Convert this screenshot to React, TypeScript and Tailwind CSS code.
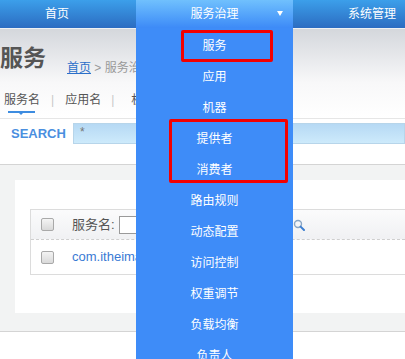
const FONT = "font-['Liberation_Sans','Noto_Sans_CJK_SC',sans-serif]";

const MENU = [
  "服务",
  "应用",
  "机器",
  "提供者",
  "消费者",
  "路由规则",
  "动态配置",
  "访问控制",
  "权重调节",
  "负载均衡",
  "负责人",
];

function Checkbox() {
  return (
    <span className="block h-[13px] w-[13px] rounded-[2px] border border-[#a9a9a9] bg-gradient-to-b from-[#f4f4f4] to-[#d9d9d9]" />
  );
}

function NavBar() {
  return (
    <div className="relative flex h-[28px] bg-gradient-to-b from-[#3c9fea] to-[#2c6cc1] text-[12px] text-white">
      <div className="flex w-[114px] shrink-0 items-center justify-center">首页</div>
      <div className="w-[22px] shrink-0" />
      <div className="relative flex w-[157px] shrink-0 items-center justify-center bg-gradient-to-b from-[#70c0fd] to-[#3d8af7]">
        服务治理
        <span className="absolute left-[141px] top-[11px] h-0 w-0 border-x-[3px] border-t-[5px] border-x-transparent border-t-white" />
      </div>
      <div className="flex w-[158px] shrink-0 items-center justify-center">系统管理</div>
    </div>
  );
}

function DropMenu() {
  return (
    <div className="absolute left-[136px] top-[28px] h-[331px] w-[157px] overflow-hidden bg-[#3e8cf8]">
      <div className="flex flex-col pt-[2px]">
        {MENU.map((m) => (
          <div key={m} className="flex h-[31px] shrink-0 items-center justify-center text-[12px] text-white">
            {m}
          </div>
        ))}
      </div>
      <div className="absolute left-[45px] top-[2px] h-[32px] w-[92px] rounded-[2px] border-[3px] border-[#f30000]" />
      <div className="absolute left-[33px] top-[91px] h-[64px] w-[119px] rounded-[2px] border-[3px] border-[#f30000]" />
    </div>
  );
}

export default function App() {
  return (
    <div className={`relative h-[359px] w-[405px] overflow-hidden bg-white ${FONT}`}>
      <NavBar />

      <div className="border-t border-b border-t-[#eef0f3] border-b-[#e6e6e6] bg-gradient-to-b from-[#d4d7dc] via-[#f8f8f9] via-60% to-white">
        <div className="flex h-[43px] pt-[15px]">
          <div className="h-[28px] text-[23px] font-bold leading-[28px] text-[#555]">服务</div>
          <div className="ml-[21px] mt-[16px] h-[16px] whitespace-nowrap text-[12px] leading-[16px] text-[#999]">
            <span className="text-[#2a6fc9] underline">首页</span> &gt; 服务治理
          </div>
        </div>
        <div className="mt-[20px] flex h-[16px] items-center whitespace-nowrap text-[12px] leading-[16px] text-[#555]">
          <span className="ml-[4px]">服务名</span>
          <span className="mx-[11px] text-[#c8c8c8]">|</span>
          <span>应用名</span>
          <span className="ml-[10px] mr-[17px] text-[#c8c8c8]">|</span>
          <span>机器</span>
        </div>
        <div className="relative ml-[8px] mt-[3px] h-[2px] w-[27px] bg-[#3d8ce0]">
          <span className="absolute left-[11px] top-[2px] h-0 w-0 border-x-[2px] border-t-[2px] border-x-transparent border-t-[#3d8ce0]" />
        </div>
        <div className="h-[5px]" />
      </div>

      <div className="flex h-[29px] items-center">
        <div className="ml-[11px] w-[62px] text-[13px] font-bold text-[#4a8fdf]">SEARCH</div>
        <div className="h-[21px] flex-1 border border-[#b7d5ea] bg-gradient-to-b from-[#b6d9f4] to-[#cdeafb] pl-[6px] text-[12px] leading-[16px] text-[#777]">
          *
        </div>
      </div>

      <div className="h-[16px]" />

      <div className="border-y border-[#d4d4d4] bg-[#f2f3f3] pb-[18px] pl-[15px] pt-[15px]">
        <div className="h-[133px] bg-white pl-[15px] pt-[29px]">
          <div className="border border-r-0 border-[#dcdcdc]">
            <div className="flex h-[30px] items-center border-b border-dashed border-b-[#cfcfcf] bg-gradient-to-b from-[#fbfbfc] to-[#f0f1f3]">
              <div className="ml-[10px]">
                <Checkbox />
              </div>
              <span className="ml-[18px] text-[13px] text-[#555]">服务名:</span>
              <div className="ml-[4px] h-[18px] w-[170px] border border-[#9a9a9a] bg-white" />
              <svg className="ml-[4px]" width="12" height="12" viewBox="0 0 12 12" fill="none">
                <circle cx="5" cy="5" r="3.5" stroke="#8aa6c4" strokeWidth="1.4" />
                <path d="M7.6 7.6 L11 11" stroke="#3d7fd0" strokeWidth="2" strokeLinecap="round" />
              </svg>
            </div>
            <div className="flex h-[34px] items-center">
              <div className="ml-[10px]">
                <Checkbox />
              </div>
              <span className="ml-[18px] w-[64px] overflow-hidden whitespace-nowrap text-[13px] text-[#3a7ad4]">
                com.itheima.service
              </span>
            </div>
          </div>
        </div>
      </div>

      <DropMenu />
    </div>
  );
}
